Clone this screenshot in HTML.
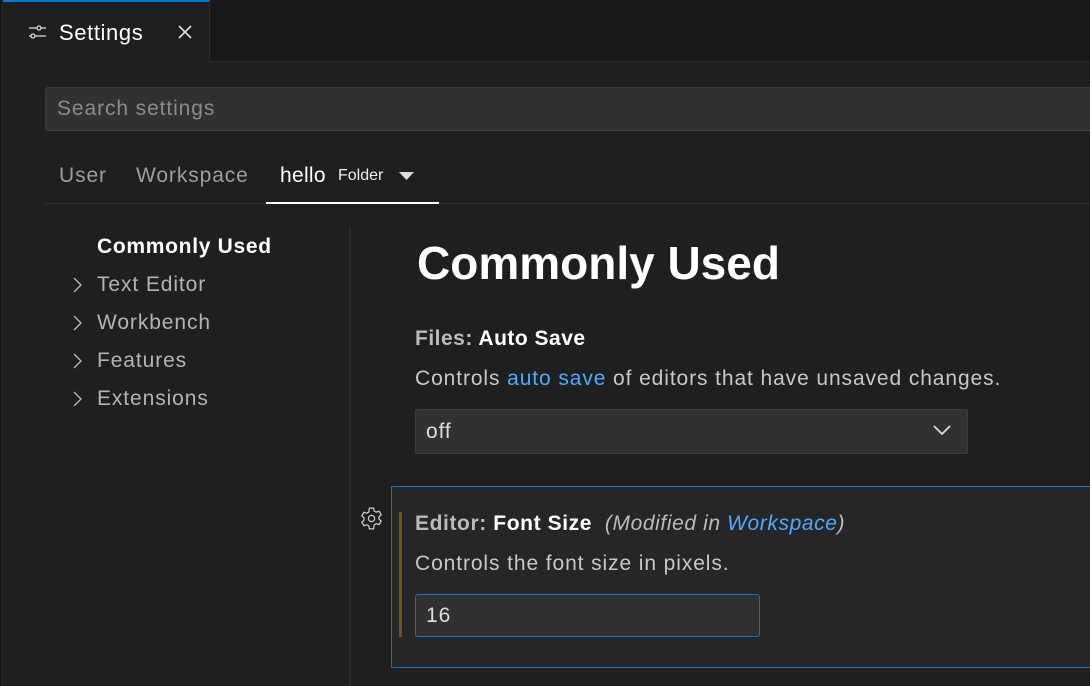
<!DOCTYPE html>
<html><head><meta charset="utf-8"><style>
*{margin:0;padding:0;box-sizing:border-box}
body{width:1090px;height:686px;background:#1f1f1f;font-family:"Liberation Sans",sans-serif;color:#ccc;position:relative;overflow:hidden}
.a{position:absolute;white-space:nowrap}
.t{font-size:21px;letter-spacing:0.9px}
</style></head><body>
<div class="a" style="left:0;top:0;width:1090px;height:62px;background:#181818;border-bottom:1px solid #2b2b2b"></div>
<div class="a" style="left:0;top:0;width:3px;height:686px;background:#181818;border-right:1px solid #2b2b2b"></div>
<div class="a" style="left:3px;top:0;width:207px;height:63px;background:#1f1f1f;border-top:2px solid #0078d4;border-right:1px solid #2b2b2b"></div>
<svg class="a" style="left:28px;top:24px" width="18" height="16" viewBox="0 0 18 16"><g stroke="#ddd" stroke-width="1.3" fill="none"><line x1="1" y1="4" x2="18" y2="4"/><line x1="1" y1="12" x2="18" y2="12"/><circle cx="11" cy="4" r="2" fill="#1f1f1f"/><circle cx="5" cy="12" r="2" fill="#1f1f1f"/></g></svg>
<div class="a" style="left:59px;top:20px;font-size:22px;letter-spacing:0.6px;color:#fff">Settings</div>
<svg class="a" style="left:178px;top:25px" width="14" height="14"><path d="M1 1L13 13M13 1L1 13" stroke="#ddd" stroke-width="1.6"/></svg>
<div class="a" style="left:45px;top:87px;width:1060px;height:44px;background:#313131;border:1px solid #3c3c3c;border-radius:3px"></div>
<div class="a t" style="left:57px;top:97px;color:#8b8b8b">Search settings</div>
<div class="a t" style="left:59px;top:164px;color:#9d9d9d">User</div>
<div class="a t" style="left:136px;top:164px;color:#9d9d9d">Workspace</div>
<div class="a t" style="left:280px;top:164px;color:#fff;letter-spacing:0.3px">hello</div>
<div class="a" style="left:338px;top:167px;font-size:16px;color:#eee">Folder</div>
<svg class="a" style="left:399px;top:172px" width="16" height="9"><path d="M0 0H15L7.5 8Z" fill="#ddd"/></svg>
<div class="a" style="left:44px;top:203px;width:1046px;height:1px;background:#2f2f2f"></div>
<div class="a" style="left:266px;top:202px;width:173px;height:2px;background:#fff"></div>
<div class="a" style="left:349px;top:228px;width:2px;height:458px;background:#2b2b2b"></div>
<div class="a t" style="left:97px;top:235px;font-weight:bold;color:#fff;letter-spacing:0.7px">Commonly Used</div>
<svg class="a" style="left:73px;top:278px" width="10" height="128"><g stroke="#bbb" stroke-width="1.3" fill="none"><path d="M1 0L8 7L1 14"/><path d="M1 38L8 45L1 52"/><path d="M1 76L8 83L1 90"/><path d="M1 114L8 121L1 128"/></g></svg>
<div class="a t" style="left:97px;top:266px;color:#b3b3b3;line-height:38px">Text Editor<br>Workbench<br>Features<br>Extensions</div>
<div class="a" style="left:417px;top:236px;font-size:46px;font-weight:bold;color:#fff">Commonly Used</div>
<div class="a t" style="left:415px;top:327px;font-weight:bold;color:#bbb;letter-spacing:0.5px">Files: <span style="color:#fff">Auto Save</span></div>
<div class="a t" style="left:415px;top:367px;color:#c8c8c8">Controls <span style="color:#4daafc">auto save</span> of editors that have unsaved changes.</div>
<div class="a" style="left:415px;top:409px;width:553px;height:45px;background:#313131;border:1px solid #3c3c3c;border-radius:2px"></div>
<div class="a t" style="left:426px;top:420px;color:#ddd">off</div>
<svg class="a" style="left:933px;top:425px" width="18" height="11"><path d="M1 1L9 9L17 1" stroke="#ddd" stroke-width="1.8" fill="none"/></svg>
<div class="a" style="left:391px;top:486px;width:710px;height:182px;background:#262628;border:1px solid #0078d4"></div>
<div class="a" style="left:399px;top:512px;width:3px;height:125px;background:#6b5320"></div>
<svg class="a" style="left:359px;top:506px" width="25" height="25" viewBox="0 0 24 24"><g fill="none" stroke="#ccc" stroke-width="1.2"><path d="M10 2h4l.6 2.8 2 1.1 2.7-.9 2 3.4-2.1 1.9v2.3l2.1 1.9-2 3.4-2.7-.9-2 1.1L14 22h-4l-.6-2.9-2-1.1-2.7.9-2-3.4 2.1-1.9v-2.3L2.7 9.4l2-3.4 2.7.9 2-1.1z"/><circle cx="12" cy="12" r="3"/></g></svg>
<div class="a t" style="left:415px;top:512px;color:#bbb;letter-spacing:0.6px"><b>Editor: <span style="color:#fff">Font Size</span></b> &nbsp;<i style="color:#bbb">(Modified in <span style="color:#4daafc">Workspace</span>)</i></div>
<div class="a t" style="left:415px;top:552px;color:#c8c8c8">Controls the font size in pixels.</div>
<div class="a" style="left:415px;top:594px;width:345px;height:43px;background:#313131;border:1px solid #0078d4;border-radius:3px"></div>
<div class="a t" style="left:426px;top:604px;color:#ddd">16</div>
</body></html>
